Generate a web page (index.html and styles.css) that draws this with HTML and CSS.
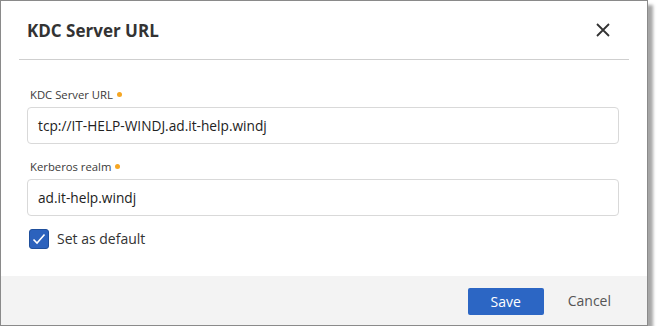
FILE: index.html
```
<!DOCTYPE html>
<html>
<head>
<meta charset="utf-8">
<link rel="stylesheet" href="styles.css">
</head>
<body>
<div class="dialog">
  <div class="header">
    <h1 class="title">KDC Server URL</h1>
    <button class="close" aria-label="Close">
      <svg width="14" height="14" viewBox="0 0 14 14"><path d="M1 1L13 13M13 1L1 13" stroke="#333" stroke-width="1.8" fill="none"/></svg>
    </button>
  </div>
  <div class="body">
    <div class="field">
      <label class="label">KDC Server URL<span class="req"></span></label>
      <div class="input">tcp://IT-HELP-WINDJ.ad.it-help.windj</div>
    </div>
    <div class="field">
      <label class="label">Kerberos realm<span class="req"></span></label>
      <div class="input">ad.it-help.windj</div>
    </div>
    <div class="check-row">
      <span class="checkbox">
        <svg width="14" height="12" viewBox="0 0 14 12"><path d="M1.5 6.5L5 10L12.5 1.5" stroke="#fff" stroke-width="1.6" fill="none"/></svg>
      </span>
      <span class="check-label">Set as default</span>
    </div>
  </div>
  <div class="footer">
    <button class="btn-save">Save</button>
    <button class="btn-cancel">Cancel</button>
  </div>
</div>
</body>
</html>
```
FILE: styles.css
```
html, body {
  margin: 0;
  padding: 0;
  background: #fff;
}
body {
  font-family: "Open Sans", "Liberation Sans", sans-serif;
  color: #333;
}
.dialog {
  width: 646px;
  height: 324px;
  border: 1px solid #8a8a8a;
  background: #fff;
  box-shadow: 5px 5px 3px rgba(0, 0, 0, 0.35);
  display: flex;
  flex-direction: column;
}
.header {
  margin: 0 18px 0 18px;
  height: 58px;
  border-bottom: 1px solid #cfcfcf;
  display: flex;
  align-items: center;
  justify-content: space-between;
  padding: 0 19px 0 8px;
}
.title {
  margin: 0;
  font-size: 17px;
  font-weight: 700;
  color: #333;
}
.close {
  border: 0;
  background: none;
  padding: 0;
  display: flex;
}
.body {
  padding: 25px 28px 0 26px;
  flex: 1;
}
.field {
  margin-bottom: 13px;
}
.label {
  display: flex;
  align-items: center;
  font-size: 11.3px;
  color: #3a3a3a;
  height: 18px;
  margin-left: 3px;
  margin-bottom: 4px;
}
.req {
  width: 5px;
  height: 5px;
  border-radius: 50%;
  background: #f5a623;
  margin-left: 4px;
}
.input {
  height: 35px;
  border: 1px solid #d9d9d9;
  border-radius: 4px;
  display: flex;
  align-items: center;
  padding-left: 10px;
  font-size: 13.7px;
  color: #222;
}
.check-row {
  display: flex;
  align-items: center;
  margin-top: -1px;
  margin-left: 2px;
}
.checkbox {
  width: 18px;
  height: 18px;
  border: 1px solid #1f4f9c;
  border-radius: 3px;
  background: #2c62bd;
  display: flex;
  align-items: center;
  justify-content: center;
  margin-top: 1px;
}
.check-label {
  margin-left: 8px;
  font-size: 14px;
  color: #333;
}
.footer {
  height: 49px;
  background: #f3f3f3;
  display: flex;
  align-items: center;
  justify-content: flex-end;
  padding-right: 36px;
}
.btn-save {
  width: 76px;
  height: 27px;
  border: 0;
  border-radius: 2px;
  background: #2c66c4;
  color: #fff;
  font-family: inherit;
  font-size: 14px;
  padding: 0;
  margin-top: 2px;
}
.btn-cancel {
  border: 0;
  background: none;
  font-family: inherit;
  font-size: 14px;
  color: #555;
  padding: 0;
  margin-left: 24px;
}
```
